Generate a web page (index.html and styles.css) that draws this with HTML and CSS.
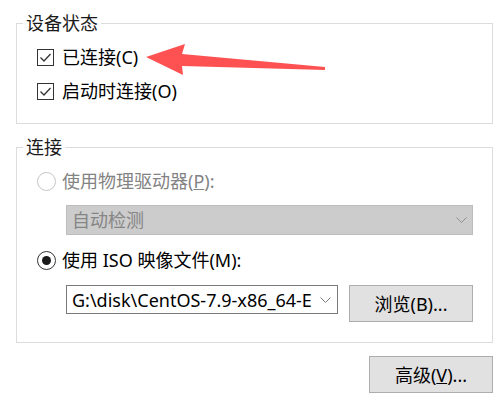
FILE: index.html
```html
<!DOCTYPE html>
<html lang="zh-CN">
<head>
<meta charset="utf-8">
<link rel="stylesheet" href="styles.css">
</head>
<body>
<div class="dialog">
  <section class="group">
    <div class="legend">设备状态</div>
    <div class="body body-status">
      <label class="row">
        <span class="check"><svg viewBox="0 0 15 15" width="15" height="15"><polyline points="2.5,7.5 6,11 12.5,4" fill="none" stroke="#333" stroke-width="1.3"/></svg></span>
        <span class="label">已连接(C)</span>
      </label>
      <label class="row">
        <span class="check"><svg viewBox="0 0 15 15" width="15" height="15"><polyline points="2.5,7.5 6,11 12.5,4" fill="none" stroke="#333" stroke-width="1.3"/></svg></span>
        <span class="label">启动时连接(O)</span>
      </label>
    </div>
  </section>

  <section class="group group-conn">
    <div class="legend">连接</div>
    <div class="body body-conn">
      <div class="row radio-row disabled">
        <span class="radio"></span>
        <span class="label">使用物理驱动器(<u>P</u>):</span>
      </div>
      <div class="select select-disabled">
        <span class="val">自动检测</span>
        <svg class="chev" viewBox="0 0 11 6" width="11" height="6"><polyline points="0.5,0.5 5.5,5.5 10.5,0.5" fill="none" stroke="#8f8f8f" stroke-width="1"/></svg>
      </div>
      <div class="row radio-row row-iso">
        <span class="radio on"></span>
        <span class="label">使用 ISO 映像文件(M):</span>
      </div>
      <div class="file-row">
        <div class="select select-file">
          <span class="val">G:\disk\CentOS-7.9-x86_64-E</span>
          <svg class="chev" viewBox="0 0 11 6" width="11" height="6"><polyline points="0.5,0.5 5.5,5.5 10.5,0.5" fill="none" stroke="#7a7a7a" stroke-width="1"/></svg>
        </div>
        <button class="btn">浏览(B)...</button>
      </div>
    </div>
  </section>

  <div class="actions">
    <button class="btn">高级(<u>V</u>)...</button>
  </div>

  <svg class="arrow" viewBox="0 0 504 408" width="504" height="408">
    <polygon points="146,57 185,44 182,54 325,67 325,70 182,66 183,75" fill="#fe5252"/>
  </svg>
</div>
</body>
</html>
```

FILE: styles.css
```css
* { box-sizing: border-box; }

html, body {
  margin: 0;
  padding: 0;
  background: #ffffff;
}

body {
  font-family: "Noto Sans", "Noto Sans CJK SC", sans-serif;
  font-size: 18px;
  color: #000;
  width: 504px;
  height: 408px;
  overflow: hidden;
}

.dialog {
  position: relative;
  padding: 23px 11px 0 16px;
  height: 408px;
}

.group {
  border: 1px solid #dcdcdc;
}

.legend {
  width: fit-content;
  margin: -13px 0 0 6px;
  padding: 0 3px;
  line-height: 25px;
  font-size: 18px;
  color: #1a1a1a;
  background: #fff;
}

.group-conn {
  margin-top: 23px;
}

.body-status {
  padding: 4px 0 15px 20px;
}

.body-conn {
  padding: 7px 0 20px 20px;
}

.row {
  display: flex;
  align-items: center;
  height: 34px;
  gap: 8px;
}

.label {
  line-height: 24px;
  white-space: nowrap;
}

.check {
  width: 17px;
  height: 17px;
  border: 1px solid #333;
  display: flex;
  align-items: center;
  justify-content: center;
  background: #fff;
}

.radio-row {
  height: 28px;
  gap: 6px;
}

.radio {
  width: 19px;
  height: 19px;
  border-radius: 50%;
  border: 1px solid #333;
  display: flex;
  align-items: center;
  justify-content: center;
  background: #fff;
}

.radio.on::after {
  content: "";
  width: 9px;
  height: 9px;
  border-radius: 50%;
  background: #1a1a1a;
}

.disabled .radio {
  border-color: #c6c6c6;
}

.disabled .label {
  color: #838383;
}

.row-iso {
  margin-top: 11px;
}

.select {
  display: flex;
  align-items: center;
  height: 30px;
  margin-left: 29px;
  padding: 0 8px 0 5px;
}

.select .val {
  flex: 1;
  overflow: hidden;
  white-space: nowrap;
  line-height: 24px;
}

.select-disabled {
  margin-top: 10px;
  width: 407px;
  background: #cccccc;
  border: 1px solid #bdbdbd;
  color: #858585;
  padding-right: 5px;
}

.file-row {
  display: flex;
  align-items: flex-start;
  gap: 11px;
  margin-top: 11px;
}

.select-file {
  width: 272px;
  height: 29px;
  border: 1px solid #7a7a7a;
  background: #fff;
  padding-right: 6px;
}

.select-file .val {
  margin-right: 4px;
}

.btn {
  font-family: inherit;
  font-size: 18px;
  color: #000;
  width: 124px;
  height: 37px;
  background: #e1e1e1;
  border: 1px solid #adadad;
  padding: 0;
  margin: 0;
  line-height: 24px;
}

.actions {
  display: flex;
  justify-content: flex-end;
  margin-top: 13px;
}

.arrow {
  position: absolute;
  left: 0;
  top: 0;
  pointer-events: none;
}
```
